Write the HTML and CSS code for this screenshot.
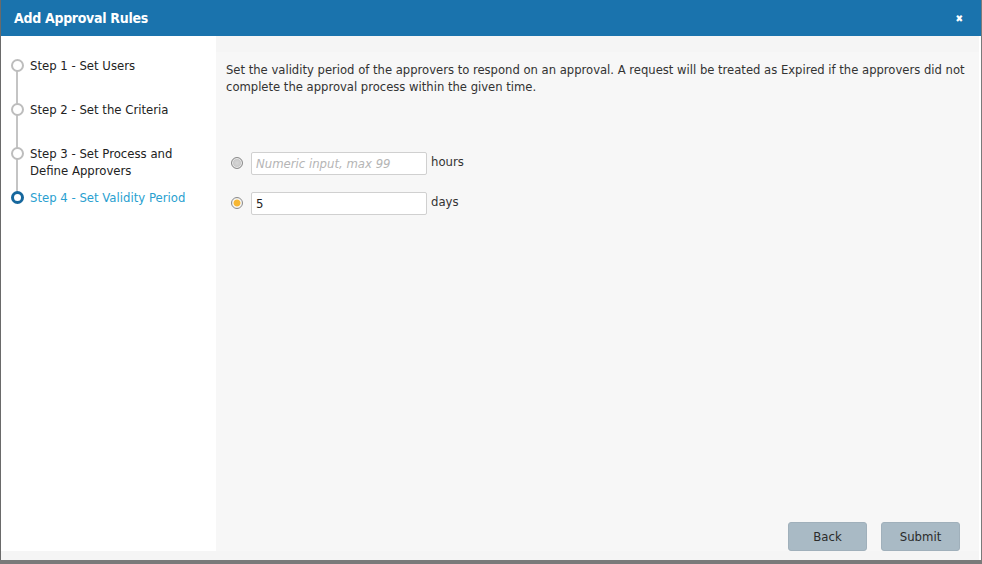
FILE: index.html
```html
<!DOCTYPE html>
<html>
<head>
<meta charset="utf-8">
<link rel="stylesheet" href="styles.css">
</head>
<body>
<div class="modal">
  <div class="modal-header">
    <span class="modal-title">Add Approval Rules</span>
    <span class="close">&#x2716;</span>
  </div>
  <div class="modal-body">
    <ul class="steps">
      <li class="step"><span class="dot"></span><span class="label">Step 1 - Set Users</span></li>
      <li class="step"><span class="dot"></span><span class="label">Step 2 - Set the Criteria</span></li>
      <li class="step"><span class="dot"></span><span class="label">Step 3 - Set Process and Define Approvers</span></li>
      <li class="step active"><span class="dot"></span><span class="label">Step 4 - Set Validity Period</span></li>
    </ul>
    <div class="panel">
      <p class="desc">Set the validity period of the approvers to respond on an approval. A request will be treated as Expired if the approvers did not complete the approval process within the given time.</p>
      <div class="options">
        <label class="option">
          <span class="radio"></span>
          <input class="field" type="text" placeholder="Numeric input, max 99">
          <span class="unit">hours</span>
        </label>
        <label class="option">
          <span class="radio checked"></span>
          <input class="field" type="text" value="5">
          <span class="unit">days</span>
        </label>
      </div>
      <div class="actions">
        <button class="btn">Back</button>
        <button class="btn">Submit</button>
      </div>
    </div>
  </div>
</div>
</body>
</html>
```
FILE: styles.css
```css
html, body {
  margin: 0;
  padding: 0;
  height: 100%;
  background: #7a7a7a;
}
body {
  font-family: "DejaVu Sans Condensed", "DejaVu Sans", sans-serif;
  color: #333;
}
.modal {
  width: 981px;
  height: 560px;
  background: #f5f5f5;
  display: flex;
  flex-direction: column;
  border-left: 1px solid #6a6a6a;
  box-sizing: border-box;
}
.modal-header {
  height: 36px;
  background: #1a73ad;
  color: #fff;
  display: flex;
  align-items: center;
  justify-content: space-between;
  padding: 0 18px 0 13px;
  flex-shrink: 0;
}
.modal-title {
  font-weight: bold;
  font-size: 14px;
  letter-spacing: -0.3px;
}
.close {
  font-size: 10px;
  font-weight: bold;
}
.modal-body {
  flex: 1;
  display: flex;
  padding-bottom: 9px;
  border-right: 2px solid #fff;
}
.steps {
  list-style: none;
  margin: 0;
  padding: 21px 0 0 0;
  width: 215px;
  background: #fff;
  position: relative;
}
.steps::before {
  content: "";
  position: absolute;
  left: 15px;
  top: 30px;
  height: 132px;
  width: 2px;
  background: #c4c4c4;
}
.step {
  position: relative;
  display: flex;
  align-items: flex-start;
  min-height: 44px;
  font-size: 13px;
  line-height: 17px;
}
.dot {
  width: 9px;
  height: 9px;
  border: 2px solid #bdbdbd;
  border-radius: 50%;
  background: #fff;
  margin: 2px 6px 0 10px;
  flex-shrink: 0;
  position: relative;
  z-index: 1;
}
.label {
  width: 160px;
  color: #222;
}
.step.active .dot {
  border: 3px solid #16679d;
  width: 7px;
  height: 7px;
}
.step.active .label {
  color: #2a9fd0;
}
.panel {
  flex: 1;
  margin-top: 16px;
  background: #f7f7f7;
  padding: 9px 10px 0 10px;
  display: flex;
  flex-direction: column;
}
.desc {
  margin: 0;
  font-size: 12.9px;
  line-height: 17px;
  color: #333;
}
.options {
  margin-top: 57px;
  display: flex;
  flex-direction: column;
  gap: 17px;
}
.option {
  display: flex;
  align-items: flex-start;
  height: 23px;
}
.radio {
  width: 10px;
  height: 10px;
  border: 1px solid #8a8a8a;
  border-radius: 50%;
  background: radial-gradient(circle, #d6d6d6 0, #c4c4c4 70%);
  margin: 5px 8px 0 5px;
  box-shadow: inset 0 0 0 1px #eee;
}
.radio.checked {
  background: radial-gradient(circle, #f7b733 0 3px, #fff 4px);
}
.field {
  width: 176px;
  height: 23px;
  box-sizing: border-box;
  border: 1px solid #d0d0d0;
  border-radius: 2px;
  background: #fff;
  padding: 0 4px;
  font-family: inherit;
  font-size: 13px;
  color: #222;
  margin: 0;
  outline: none;
}
.field::placeholder {
  color: #b5b5b5;
  font-style: italic;
}
.unit {
  font-size: 13px;
  margin-left: 4px;
  line-height: 20px;
}
.actions {
  margin-top: auto;
  display: flex;
  justify-content: flex-end;
  gap: 14px;
  padding-right: 9px;
  padding-bottom: 0;
}
.btn {
  width: 79px;
  height: 29px;
  border: 1px solid #a0b0bb;
  border-radius: 3px;
  background: #a9bac5;
  font-family: inherit;
  font-size: 13px;
  color: #2b2b2b;
}
```
